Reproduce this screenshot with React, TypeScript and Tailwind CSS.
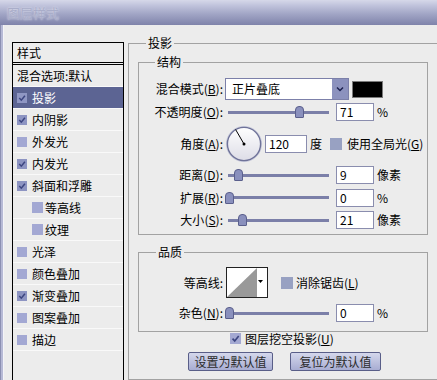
import React from "react";

function CheckBox({ checked, cls }: { checked?: boolean; cls: string }) {
  return (
    <span className={`flex flex-none items-center justify-center ${cls}`}>
      {checked && (
        <svg viewBox="0 0 10 10" className="h-full w-full">
          <path d="M2.3 5.1 L4.3 7.2 L7.9 2.8" fill="none" stroke="#3c4580" strokeWidth="1.5" />
        </svg>
      )}
    </span>
  );
}

function Lbl({ t, k }: { t: string; k?: string }) {
  return (
    <div className="w-[84px] flex-none text-right whitespace-nowrap">
      {t}
      {k && (
        <>
          (<span className="underline">{k}</span>)
        </>
      )}
      :
    </div>
  );
}

function Slider({ pos }: { pos: number }) {
  return (
    <div className="relative ml-[2px] flex h-full w-[105px] flex-none items-center">
      <div className="ml-[3px] h-[3px] w-[101px] bg-[#7b7fa8]" />
      <div
        className="absolute top-[calc(50%-6px)] h-[12px] w-[9px] rounded-t-[4px] rounded-b-[1px] border border-[#5a5f8c] bg-[#8a90bd]"
        style={{ left: pos }}
      />
    </div>
  );
}

function Field({ v, cls }: { v: string; cls: string }) {
  return (
    <div className={`h-[18px] flex-none border border-[#8a8dae] bg-white pl-[3px] leading-[16px] ${cls}`}>
      {v}
    </div>
  );
}

const rows: { t: string; c: boolean; sel?: boolean; sub?: boolean }[] = [
  { t: "投影", c: true, sel: true },
  { t: "内阴影", c: true },
  { t: "外发光", c: false },
  { t: "内发光", c: true },
  { t: "斜面和浮雕", c: true },
  { t: "等高线", c: false, sub: true },
  { t: "纹理", c: false, sub: true },
  { t: "光泽", c: false },
  { t: "颜色叠加", c: false },
  { t: "渐变叠加", c: true },
  { t: "图案叠加", c: false },
  { t: "描边", c: false },
];

export default function App() {
  return (
    <div className="flex h-[380px] w-[437px] flex-col overflow-hidden bg-[#ececec] text-[12px] leading-[14px] text-black [font-family:'Noto_Sans_CJK_SC',sans-serif]">
      {/* title bar */}
      <div className="flex h-[25px] flex-none items-center bg-[linear-gradient(to_bottom,#d6d8e9_0%,#c2c5dd_20%,#a2a6c6_55%,#7f83aa_100%)] pl-[7px]">
        <span className="text-[13px] text-[#a9adc9] [text-shadow:0_0_2px_#e8e9f3]">图层样式</span>
      </div>

      <div className="flex min-h-0 flex-1">
        {/* window edge */}
        <div className="w-[4px] flex-none border-l border-r border-l-[#8b8fb2] border-r-[#f4f4f8] bg-[#b6b9d5]" />

        {/* styles list */}
        <div className="ml-[8px] mt-[17px] flex w-[112px] flex-none flex-col border-x border-t border-black">
          <div className="h-[19px] pl-[4px] leading-[19px]">样式</div>
          <div className="h-[3px] border-y border-black" />
          <div className="h-[22px] border-b border-[#f9f9f9] pl-[4px] leading-[21px] whitespace-nowrap">混合选项:默认</div>
          {rows.map((r) => (
            <div
              key={r.t}
              className={`flex h-[22px] items-center border-b border-[#f9f9f9] ${r.sel ? "bg-[#5c6493] text-white" : ""}`}
            >
              <CheckBox
                checked={r.c}
                cls={`${r.sub ? "ml-[19px] h-[11px] w-[11px]" : "ml-[4px] h-[10px] w-[10px]"} ${r.sel ? "bg-[#8f96c3]" : r.c ? "bg-[#8d94c2]" : "bg-[#a3a8d3]"}`}
              />
              <span className={r.sub ? "ml-[2px]" : "ml-[5px]"}>{r.t}</span>
            </div>
          ))}
        </div>

        {/* right panel */}
        <fieldset className="ml-[4px] mt-[11px] w-[330px] min-w-0 flex-none border border-[#a2a2a2] pb-[30px]">
          <legend className="ml-[17px] px-[2px] leading-[14px]">投影</legend>

          {/* 结构 */}
          <fieldset className="ml-[9px] mt-[5px] w-[290px] border border-[#a2a2a2] pb-[3px]">
            <legend className="ml-[16px] px-[2px] leading-[14px]">结构</legend>

            <div className="mt-[9px] flex h-[22px] items-center">
              <Lbl t="混合模式" k="B" />
              <div className="ml-[2px] flex h-[22px] w-[124px] flex-none border border-[#7c80a9] bg-white">
                <div className="flex-1 pl-[6px] leading-[20px]">正片叠底</div>
                <div className="flex w-[16px] items-center justify-center bg-[#8c92be]">
                  <svg width="8" height="6" viewBox="0 0 8 6">
                    <path d="M1 1.5 L4 4.5 L7 1.5" fill="none" stroke="#1d2250" strokeWidth="1.5" />
                  </svg>
                </div>
              </div>
              <div className="ml-[3px] h-[17px] w-[31px] flex-none border border-[#7a7a7a] bg-black" />
            </div>

            <div className="flex h-[24px] items-center">
              <Lbl t="不透明度" k="O" />
              <Slider pos={70} />
              <Field v="71" cls="ml-[6px] w-[38px]" />
              <span className="ml-[3px]">%</span>
            </div>

            <div className="flex h-[40px] items-center">
              <Lbl t="角度" k="A" />
              <svg className="ml-[2px] flex-none" width="38" height="38" viewBox="0 0 38 38">
                <defs>
                  <linearGradient id="dg" x1="0" y1="0" x2="0" y2="1">
                    <stop offset="0" stopColor="#ffffff" />
                    <stop offset="1" stopColor="#dcdce6" />
                  </linearGradient>
                </defs>
                <circle cx="19" cy="19" r="17.6" fill="url(#dg)" stroke="#c8cadc" strokeWidth="1" />
                <circle cx="19" cy="19" r="16.6" fill="none" stroke="#6f7399" strokeWidth="1.4" />
                <line x1="19" y1="19" x2="10.6" y2="4.5" stroke="#000" strokeWidth="1" />
                <circle cx="19" cy="19" r="1.5" fill="#000" />
              </svg>
              <Field v="120" cls="ml-[2px] w-[42px]" />
              <span className="ml-[3px]">度</span>
              <span className="ml-[8px] h-[12px] w-[12px] flex-none bg-[#98a1c2]" />
              <span className="ml-[5px] whitespace-nowrap">
                使用全局光(<span className="underline">G</span>)
              </span>
            </div>

            <div className="flex h-[22px] items-center">
              <Lbl t="距离" k="D" />
              <Slider pos={9} />
              <Field v="9" cls="ml-[6px] w-[38px]" />
              <span className="ml-[3px]">像素</span>
            </div>

            <div className="flex h-[23px] items-center">
              <Lbl t="扩展" k="R" />
              <Slider pos={0} />
              <Field v="0" cls="ml-[6px] w-[38px]" />
              <span className="ml-[3px]">%</span>
            </div>

            <div className="flex h-[22px] items-center">
              <Lbl t="大小" k="S" />
              <Slider pos={13} />
              <Field v="21" cls="ml-[6px] w-[38px]" />
              <span className="ml-[3px]">像素</span>
            </div>
          </fieldset>

          {/* 品质 */}
          <fieldset className="ml-[9px] mt-[10px] w-[290px] border border-[#a2a2a2] pb-[6px]">
            <legend className="ml-[17px] px-[2px] leading-[14px]">品质</legend>

            <div className="mt-[8px] flex h-[31px] items-center">
              <div className="w-[84px] flex-none text-right">等高线:</div>
              <svg className="ml-[3px] flex-none" width="42" height="31" viewBox="0 0 42 31">
                <rect x="0.5" y="0.5" width="41" height="30" fill="#fff" stroke="#222" />
                <polygon points="1,30 31,1 31,30" fill="#999" />
                <polygon points="32,13 37,13 34.5,16" fill="#000" />
              </svg>
              <span className="ml-[13px] h-[12px] w-[12px] flex-none bg-[#98a1c2]" />
              <span className="ml-[3px] whitespace-nowrap">
                消除锯齿(<span className="underline">L</span>)
              </span>
            </div>

            <div className="mt-[3px] flex h-[24px] items-center">
              <Lbl t="杂色" k="N" />
              <Slider pos={0} />
              <Field v="0" cls="ml-[6px] w-[38px]" />
              <span className="ml-[3px]">%</span>
            </div>
          </fieldset>

          <div className="flex h-[13px] items-center">
            <CheckBox checked cls="ml-[101px] h-[11px] w-[11px] bg-[#a4a9d2]" />
            <span className="ml-[4px] whitespace-nowrap">
              图层挖空投影(<span className="underline">U</span>)
            </span>
          </div>

          <div className="mt-[7px] flex h-[19px]">
            <button className="ml-[59px] h-[19px] w-[85px] flex-none rounded-[2px] border border-[#595e88] bg-[linear-gradient(to_bottom,#d4d7ec,#a8add2)] text-[12px] leading-[17px] text-[#2b2b2b]">
              设置为默认值
            </button>
            <button className="ml-[17px] h-[19px] w-[91px] flex-none rounded-[2px] border border-[#595e88] bg-[linear-gradient(to_bottom,#d4d7ec,#a8add2)] text-[12px] leading-[17px] text-[#2b2b2b]">
              复位为默认值
            </button>
          </div>
        </fieldset>
      </div>
    </div>
  );
}
